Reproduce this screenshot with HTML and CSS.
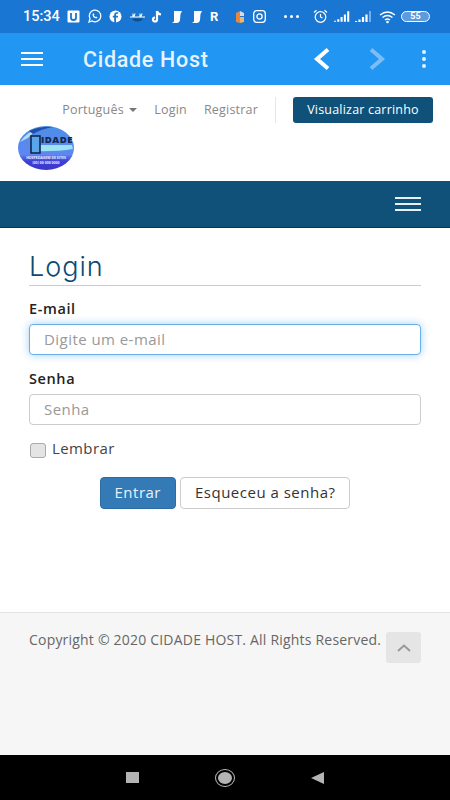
FILE: index.html
```html
<!DOCTYPE html>
<html>
<head>
	<meta name="viewport" content="width=device-width, initial-scale=1.0">
	<meta charset="utf-8">
	<link rel="stylesheet" href="styles.css">
	<title>Cidade Host</title>
</head>
<body>
	<div class="phone">
		<div class="status-bar">
			<span class="clock">15:34</span>
			<div class="status-icons">
				<svg width="13" height="13" viewBox="0 0 13 13"><rect x="0.5" y="0.5" width="12" height="12" rx="1" fill="#fff"/><path d="M4 3v5q0 2 2.500 2t2.500-2V3" fill="none" stroke="#1976d2" stroke-width="1.800"/></svg>
				<svg width="15" height="15" viewBox="0 0 15 15"><path d="M2 13l1-3.200a5.800 5.800 0 1 1 2.200 2.200z" fill="none" stroke="#fff" stroke-width="1.300"/><path d="M5.500 5q0 4 4 4.500l1-1.200-1.500-.8-.7.600-1.500-1.600.6-.8-.7-1.500z" fill="#fff"/></svg>
				<svg width="13" height="13" viewBox="0 0 13 13"><circle cx="6.500" cy="6.500" r="6" fill="#fff"/><path d="M7 13V7.500h2V5.800H7V4.700q0-1 1-1h1.200V2.200H7.800Q5.200 2.200 5.200 4.700v1.100H3.800v1.700h1.400V13z" fill="#1976d2"/></svg>
				<svg width="17" height="12" viewBox="0 0 17 12"><path d="M1 6h15M4 2.500v3M6 2.500q0 2 -2 3M11 2.500v3M13 2.500q0 2 -2 3" stroke="#fff" stroke-width="1.100" fill="none"/><path d="M3 7.500h11q-1 3-5.500 3T3 7.500z" fill="#0f4f88"/></svg>
				<svg class="tiktok" width="12" height="14" viewBox="0 0 12 14"><path d="M6 1v8.500a2 2 0 1 1-2-2M6 1q.5 3 4 3.500" fill="none" stroke="#fff" stroke-width="2.200"/></svg>
				<svg width="13" height="14" viewBox="0 0 13 14"><path d="M4 1h8L10.500 4 10 10q-.5 3-3.500 3H2L4 11.500z" fill="#fff"/></svg>
				<svg width="13" height="14" viewBox="0 0 13 14"><path d="M4 1h8L10.500 4 10 10q-.5 3-3.500 3H2L4 11.500z" fill="#fff"/></svg>
				<span class="status-r">R</span>
				<svg class="multi" width="12" height="14" viewBox="0 0 12 14"><path d="M2 3l4-2v12l-4-1z" fill="#e8873a"/><path d="M6 1l4 2v3H6z" fill="#d9d9e8"/><path d="M6 7h4v5l-4 1z" fill="#f2b46a"/></svg>
				<svg width="13" height="13" viewBox="0 0 13 13"><rect x="0.700" y="0.700" width="11.600" height="11.600" rx="3" fill="none" stroke="#fff" stroke-width="1.300"/><circle cx="6.500" cy="6.500" r="2.600" fill="none" stroke="#fff" stroke-width="1.300"/></svg>
				<span class="status-dots"><i></i><i></i><i></i></span>
				<svg class="alarm" width="15" height="15" viewBox="0 0 15 15"><circle cx="7.500" cy="8" r="5.300" fill="none" stroke="#fff" stroke-width="1.200"/><path d="M7.500 5v3l2 1M1 3.500L3.500 1.200M14 3.500L11.500 1.200" fill="none" stroke="#fff" stroke-width="1.200"/></svg>
				<svg class="signal" width="18" height="13" viewBox="0 0 19 13"><path d="M1 12v-1M4.500 12V9.500M8 12V7M11.500 12V4.500M15 12V1" stroke="#fff" stroke-width="2.200"/></svg>
				<svg class="signal two" width="17" height="13" viewBox="0 0 17 13"><path d="M1 12v-1M4.500 12V9.500M8 12V7M11.500 12V4.500" stroke="#fff" stroke-width="2.200"/><path d="M15 12V1" stroke="#8fbce8" stroke-width="1.600"/></svg>
				<svg width="17" height="14" viewBox="0 0 17 14"><path d="M1 5q7.500-6 15 0M3.500 7.500q5-4 10 0M6 10q2.500-2 5 0" fill="none" stroke="#fff" stroke-width="1.400"/><circle cx="8.500" cy="12" r="1.300" fill="#fff"/></svg>
				<span class="battery">55</span>
			</div>
		</div>

		<div class="app-bar">
			<div class="burger app-burger"><i></i><i></i><i></i></div>
			<div class="app-title">Cidade Host</div>
			<svg class="nav-arrow" width="18" height="24" viewBox="0 0 18 24"><path d="M15 2.500L4 12l11 9.500" fill="none" stroke="#fff" stroke-width="4"/></svg>
			<svg class="nav-arrow next" width="18" height="24" viewBox="0 0 18 24"><path d="M3 2.500L14 12 3 21.500" fill="none" stroke="#7cbdf5" stroke-width="4"/></svg>
			<div class="app-more"><i></i><i></i><i></i></div>
		</div>

		<header class="site-head">
			<div class="top-links">
				<a>Português <span class="caret"></span></a>
				<a>Login</a>
				<a>Registrar</a>
				<span class="divider"></span>
				<a class="cart-btn">Visualizar carrinho</a>
			</div>
			<svg class="logo" width="58" height="46" viewBox="0 0 58 46">
				<defs>
					<linearGradient id="logoFill" x1="0" y1="0" x2="0" y2="1">
						<stop offset="0" stop-color="#4c8fe6"/>
						<stop offset="0.650" stop-color="#5f86f2"/>
						<stop offset="0.800" stop-color="#3f3fd6"/>
						<stop offset="1" stop-color="#3a36c8"/>
					</linearGradient>
				</defs>
				<ellipse cx="29" cy="23" rx="28" ry="22" fill="url(#logoFill)"/>
				<path d="M3 17Q10 6 26 2q-11 6-15 11z" fill="#b9dcf7"/>
				<path d="M12 6Q24 1 36 2q-12 2-20 7z" fill="#1f4fa8"/>
				<path d="M15 20H55l1 4Q38 27 15 26z" fill="#9be3f2"/>
				<rect x="14" y="11" width="9" height="17" fill="#5aa6ea" stroke="#12284f" stroke-width="1.600"/>
				<text x="24" y="18" class="logo-name">IDADE</text>
				<text x="29" y="34" class="logo-small">HOSPEDAGEM DE SITES</text>
				<text x="29" y="39" class="logo-small">(00) 00 000 0000</text>
			</svg>
		</header>

		<nav class="site-nav">
			<div class="burger nav-burger"><i></i><i></i><i></i></div>
		</nav>

		<main class="content">
			<h1 class="page-title">Login</h1>
			<label class="field-label">E-mail</label>
			<input class="field focused" type="text" placeholder="Digite um e-mail">
			<label class="field-label second">Senha</label>
			<input class="field" type="text" placeholder="Senha">
			<label class="remember"><span class="check"></span>Lembrar</label>
			<div class="actions">
				<button class="btn btn-primary">Entrar</button>
				<button class="btn">Esqueceu a senha?</button>
			</div>
		</main>

		<footer class="site-foot">
			<p>Copyright © 2020 CIDADE HOST. All Rights Reserved.</p>
			<div class="to-top"><svg width="14" height="8" viewBox="0 0 14 8"><path d="M1 7l6-5.500L13 7" fill="none" stroke="#999" stroke-width="2"/></svg></div>
		</footer>

		<div class="android-nav">
			<span class="nav-square"></span>
			<span class="nav-circle"><i></i></span>
			<span class="nav-back"></span>
		</div>
	</div>
</body>
</html>
```

FILE: styles.css
```css
body {
	margin: 0;
	background-color: #fff;
	font-family: "Open Sans", sans-serif;
	color: #333;
}
.phone {
	display: flex;
	flex-direction: column;
	width: 450px;
	height: 800px;
	overflow: hidden;
}

/* status bar */
.status-bar {
	display: flex;
	align-items: center;
	height: 33px;
	padding-left: 23px;
	background-color: #1976d2;
	color: #fff;
	flex-shrink: 0;
}
.clock {
	width: 44px;
	font-family: Roboto, sans-serif;
	font-size: 14.500px;
	font-weight: 500;
}
.status-icons {
	display: flex;
	align-items: center;
	gap: 7px;
	flex: 1;
}
.status-icons .tiktok {
	margin-left: -2px;
}
.status-icons .multi {
	margin-left: 8px;
}
.status-r {
	width: 9px;
	font-family: Roboto, sans-serif;
	font-size: 13px;
	font-weight: 700;
}
.status-dots {
	display: flex;
	gap: 3px;
	margin-left: 11px;
	margin-right: 7px;
}
.status-dots i {
	width: 3px;
	height: 3px;
	border-radius: 50%;
	background-color: #fff;
}
.status-icons .signal {
	margin-left: -1px;
}
.status-icons .signal.two {
	margin-left: -4px;
}
.battery {
	display: block;
	width: 27px;
	height: 9px;
	margin-left: -2px;
	border: 1px solid #fff;
	border-radius: 6px;
	font-family: Roboto, sans-serif;
	font-size: 9px;
	font-weight: 700;
	line-height: 9px;
	text-align: center;
	background-color: #5d9bdc;
}

/* app bar */
.app-bar {
	display: flex;
	align-items: center;
	height: 52px;
	background-color: #2196f3;
	flex-shrink: 0;
}
.burger {
	display: flex;
	flex-direction: column;
}
.burger i {
	display: block;
	background-color: #fff;
}
.app-burger {
	gap: 4px;
	margin-left: 21px;
}
.app-burger i {
	width: 22px;
	height: 2px;
}
.app-title {
	margin-left: 40px;
	flex: 1;
	font-family: Roboto, sans-serif;
	font-size: 21.500px;
	font-weight: 500;
	letter-spacing: 0.7px;
	color: #e6f3fe;
}
.nav-arrow {
	margin-right: 37px;
}
.nav-arrow.next {
	margin-right: 36px;
}
.app-more {
	display: flex;
	flex-direction: column;
	gap: 3px;
	margin-right: 24px;
}
.app-more i {
	width: 4px;
	height: 4px;
	border-radius: 50%;
	background-color: #e6f3fe;
}

/* site header */
.site-head {
	height: 96px;
	padding-left: 17px;
	padding-right: 17px;
	background-color: #fff;
	flex-shrink: 0;
}
.top-links {
	display: flex;
	align-items: center;
	justify-content: flex-end;
	height: 26px;
	padding-top: 12px;
	font-size: 12.500px;
	letter-spacing: 0.2px;
	color: #888;
}
.top-links a {
	margin-left: 17px;
	padding-bottom: 2px;
}
.caret {
	display: inline-block;
	margin-left: 2px;
	vertical-align: middle;
	border-top: 4px solid #777;
	border-left: 4px solid transparent;
	border-right: 4px solid transparent;
}
.divider {
	width: 1px;
	height: 26px;
	margin-left: 17px;
	background-color: #e7e7e7;
}
.top-links .cart-btn {
	width: 140px;
	margin-left: 17px;
	padding: 0;
	height: 26px;
	line-height: 26px;
	border-radius: 3px;
	background-color: #0f5179;
	color: #fff;
	text-align: center;
}
.logo {
	display: block;
	margin-top: 2px;
}
.logo-name {
	font-family: "Open Sans", sans-serif;
	font-size: 9.500px;
	font-weight: 800;
	letter-spacing: 0.5px;
	fill: #12284f;
}
.logo-small {
	font-family: "Open Sans", sans-serif;
	font-size: 3.500px;
	font-weight: 700;
	fill: #e8ecff;
	text-anchor: middle;
}

/* navy bar */
.site-nav {
	display: flex;
	align-items: center;
	justify-content: flex-end;
	height: 47px;
	padding-right: 29px;
	background-color: #0f5179;
	border-bottom: 1px solid #0a3550;
	box-sizing: border-box;
	flex-shrink: 0;
}
.nav-burger {
	gap: 4px;
}
.nav-burger i {
	width: 26px;
	height: 2px;
	background-color: #e8f0f5;
}

/* login form */
.content {
	display: flex;
	flex-direction: column;
	flex: 1;
	padding-left: 29px;
	padding-right: 29px;
	background-color: #fff;
}
.page-title {
	margin: 22px 0 0;
	padding-bottom: 2px;
	height: 33px;
	border-bottom: 1px solid #ccc;
	font-family: Inter, sans-serif;
	font-size: 27px;
	font-weight: 300;
	line-height: 33px;
	letter-spacing: 1px;
	color: #0c4a70;
}
.field-label {
	margin-top: 14px;
	margin-bottom: 6px;
	font-size: 14.500px;
	font-weight: 600;
	line-height: 18px;
	letter-spacing: 0.6px;
	color: #222;
}
.field-label.second {
	margin-top: 15px;
}
.field {
	box-sizing: border-box;
	width: 100%;
	height: 31px;
	padding: 0 14px 1px;
	border: 1px solid #ccc;
	border-radius: 4px;
	font-family: "Open Sans", sans-serif;
	font-size: 15px;
	letter-spacing: 0.45px;
	color: #555;
	outline: none;
}
.field::placeholder {
	color: #999;
	opacity: 1;
}
.field.focused {
	border-color: #66afe9;
	box-shadow: 0 0 8px rgba(102, 175, 233, 0.6);
}
.remember {
	display: flex;
	align-items: center;
	margin-top: 13px;
	font-size: 15px;
	line-height: 20px;
	letter-spacing: 0.4px;
	color: #444;
}
.check {
	box-sizing: border-box;
	width: 16px;
	height: 15px;
	margin-top: 5px;
	margin-left: 1px;
	margin-right: 6px;
	border: 1px solid #aaa;
	border-radius: 3px;
	background-color: #e4e4e4;
}
.actions {
	display: flex;
	justify-content: center;
	gap: 4px;
	margin-top: 19px;
}
.btn {
	box-sizing: border-box;
	height: 32px;
	padding: 0 14px 2px;
	border: 1px solid #ccc;
	border-radius: 4px;
	background-color: #fff;
	font-family: "Open Sans", sans-serif;
	font-size: 15px;
	letter-spacing: 0.5px;
	color: #333;
}
.btn-primary {
	border-color: #2e6da4;
	background-color: #337ab7;
	color: #e8f2fa;
}

/* footer */
.site-foot {
	display: flex;
	align-items: flex-start;
	box-sizing: border-box;
	height: 143px;
	padding-top: 18px;
	padding-left: 29px;
	background-color: #f6f6f6;
	border-top: 1px solid #e3e3e3;
	flex-shrink: 0;
}
.site-foot p {
	margin: 0;
	font-size: 14px;
	line-height: 18px;
	letter-spacing: 0.2px;
	color: #666;
}
.to-top {
	display: flex;
	align-items: center;
	justify-content: center;
	width: 35px;
	height: 31px;
	margin-left: 5px;
	margin-top: 1px;
	border-radius: 3px;
	background-color: #e5e5e5;
}

/* android nav */
.android-nav {
	display: flex;
	align-items: center;
	height: 45px;
	padding-left: 126px;
	background-color: #000;
	flex-shrink: 0;
}
.nav-square {
	width: 13px;
	height: 11px;
	background-color: #b4b4b4;
}
.nav-circle {
	display: flex;
	align-items: center;
	justify-content: center;
	box-sizing: border-box;
	width: 20px;
	height: 18px;
	margin-left: 76px;
	border: 1.500px solid #bbb;
	border-radius: 50%;
}
.nav-circle i {
	width: 14px;
	height: 12px;
	border-radius: 50%;
	background-color: #b4b4b4;
}
.nav-back {
	width: 0;
	height: 0;
	margin-left: 76px;
	border-top: 6.500px solid transparent;
	border-bottom: 6.500px solid transparent;
	border-right: 13px solid #b4b4b4;
}
```
